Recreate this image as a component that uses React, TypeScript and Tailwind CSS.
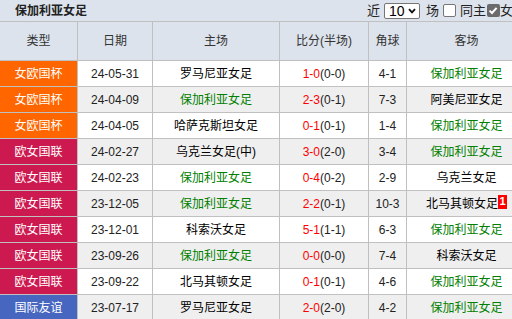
import React from "react";

type Match = {
  type: string;
  kind: "cup" | "league" | "friendly";
  date: string;
  home: string;
  score: string;
  half: string;
  corner: string;
  away: string;
  awayBadge?: string;
  shade: boolean;
};

const TEAM = "保加利亚女足";

const matches: Match[] = [
  { type: "女欧国杯", kind: "cup", date: "24-05-31", home: "罗马尼亚女足", score: "1-0", half: "(0-0)", corner: "4-1", away: TEAM, shade: false },
  { type: "女欧国杯", kind: "cup", date: "24-04-09", home: TEAM, score: "2-3", half: "(0-1)", corner: "7-3", away: "阿美尼亚女足", shade: true },
  { type: "女欧国杯", kind: "cup", date: "24-04-05", home: "哈萨克斯坦女足", score: "0-1", half: "(0-1)", corner: "1-4", away: TEAM, shade: false },
  { type: "欧女国联", kind: "league", date: "24-02-27", home: "乌克兰女足(中)", score: "3-0", half: "(2-0)", corner: "3-4", away: TEAM, shade: true },
  { type: "欧女国联", kind: "league", date: "24-02-23", home: TEAM, score: "0-4", half: "(0-2)", corner: "2-9", away: "乌克兰女足", shade: false },
  { type: "欧女国联", kind: "league", date: "23-12-05", home: TEAM, score: "2-2", half: "(0-1)", corner: "10-3", away: "北马其顿女足", awayBadge: "1", shade: true },
  { type: "欧女国联", kind: "league", date: "23-12-01", home: "科索沃女足", score: "5-1", half: "(1-1)", corner: "6-3", away: TEAM, shade: false },
  { type: "欧女国联", kind: "league", date: "23-09-26", home: TEAM, score: "0-0", half: "(0-0)", corner: "7-4", away: "科索沃女足", shade: true },
  { type: "欧女国联", kind: "league", date: "23-09-22", home: "北马其顿女足", score: "0-1", half: "(0-1)", corner: "4-6", away: TEAM, shade: false },
  { type: "国际友谊", kind: "friendly", date: "23-07-17", home: "罗马尼亚女足", score: "2-0", half: "(2-0)", corner: "4-2", away: TEAM, shade: true },
];

const kindBg = {
  cup: "bg-[#ff6600]",
  league: "bg-[#cc1a50]",
  friendly: "bg-[#4666c0]",
};

const Team = ({ name }: { name: string }) => (
  <span className={name === TEAM ? "text-[#008000]" : "text-black"}>{name}</span>
);

const Cell = ({ children, shade }: { children: React.ReactNode; shade: boolean }) => (
  <div className={`flex items-center justify-center whitespace-nowrap ${shade ? "bg-[#efefef]" : "bg-white"}`}>
    {children}
  </div>
);

export default function App() {
  return (
    <div
      className="h-[319px] w-full overflow-hidden bg-white text-[12px] text-[#222]"
      style={{ fontFamily: '"Liberation Sans", "Noto Sans CJK SC", sans-serif' }}
    >
      <div className="w-[526px]">
        <div className="flex h-[22px] items-center justify-between border-b border-[#c0c0c0] bg-[#dde3ec] pl-[15px]">
          <span className="font-bold text-[#222]">保加利亚女足</span>
          <div className="flex items-center text-[13px] text-[#222]">
            <span>近</span>
            <span className="ml-[4px] flex h-[16px] w-[36px] items-center justify-between rounded-[2px] border border-[#767676] bg-white pl-[4px] pr-[3px] text-[14px] leading-none text-black">
              10
              <svg width="8" height="6" viewBox="0 0 8 6">
                <path d="M1 1.2 4 4.4 7 1.2" fill="none" stroke="#111" strokeWidth="1.8" />
              </svg>
            </span>
            <span className="ml-[6px]">场</span>
            <span className="ml-[4px] h-[13px] w-[13px] rounded-[2px] border border-[#767676] bg-white" />
            <span className="ml-[4px]">同主</span>
            <span className="ml-[1px] flex h-[13px] w-[13px] items-center justify-center rounded-[2px] bg-[#6b6b6b]">
              <svg width="10" height="9" viewBox="0 0 10 9">
                <path d="M1.5 4.6 4 7 8.6 1.8" fill="none" stroke="#fff" strokeWidth="2" />
              </svg>
            </span>
            <span>女足</span>
          </div>
        </div>

        <div className="grid grid-cols-[77px_74px_126px_88px_37px_1fr] grid-rows-[38px_repeat(10,25px)] gap-px bg-[#c0c0c0]">
          {["类型", "日期", "主场", "比分(半场)", "角球", "客场"].map((h) => (
            <div key={h} className="flex items-center justify-center bg-[#dde3ec] text-[12px] text-[#333]">
              {h}
            </div>
          ))}
          {matches.map((m, i) => (
            <React.Fragment key={i}>
              <div className={`flex items-center justify-center text-white ${kindBg[m.kind]}`}>{m.type}</div>
              <Cell shade={m.shade}>{m.date}</Cell>
              <Cell shade={m.shade}>
                <Team name={m.home} />
              </Cell>
              <Cell shade={m.shade}>
                <span className="text-[#ff0000]">{m.score}</span>
                <span>{m.half}</span>
              </Cell>
              <Cell shade={m.shade}>{m.corner}</Cell>
              <Cell shade={m.shade}>
                <Team name={m.away} />
                {m.awayBadge && (
                  <span className="-mt-[4px] flex h-[14px] w-[9px] items-center justify-center bg-[#ff0000] text-[11px] font-bold leading-none text-white">
                    {m.awayBadge}
                  </span>
                )}
              </Cell>
            </React.Fragment>
          ))}
        </div>
      </div>
    </div>
  );
}
